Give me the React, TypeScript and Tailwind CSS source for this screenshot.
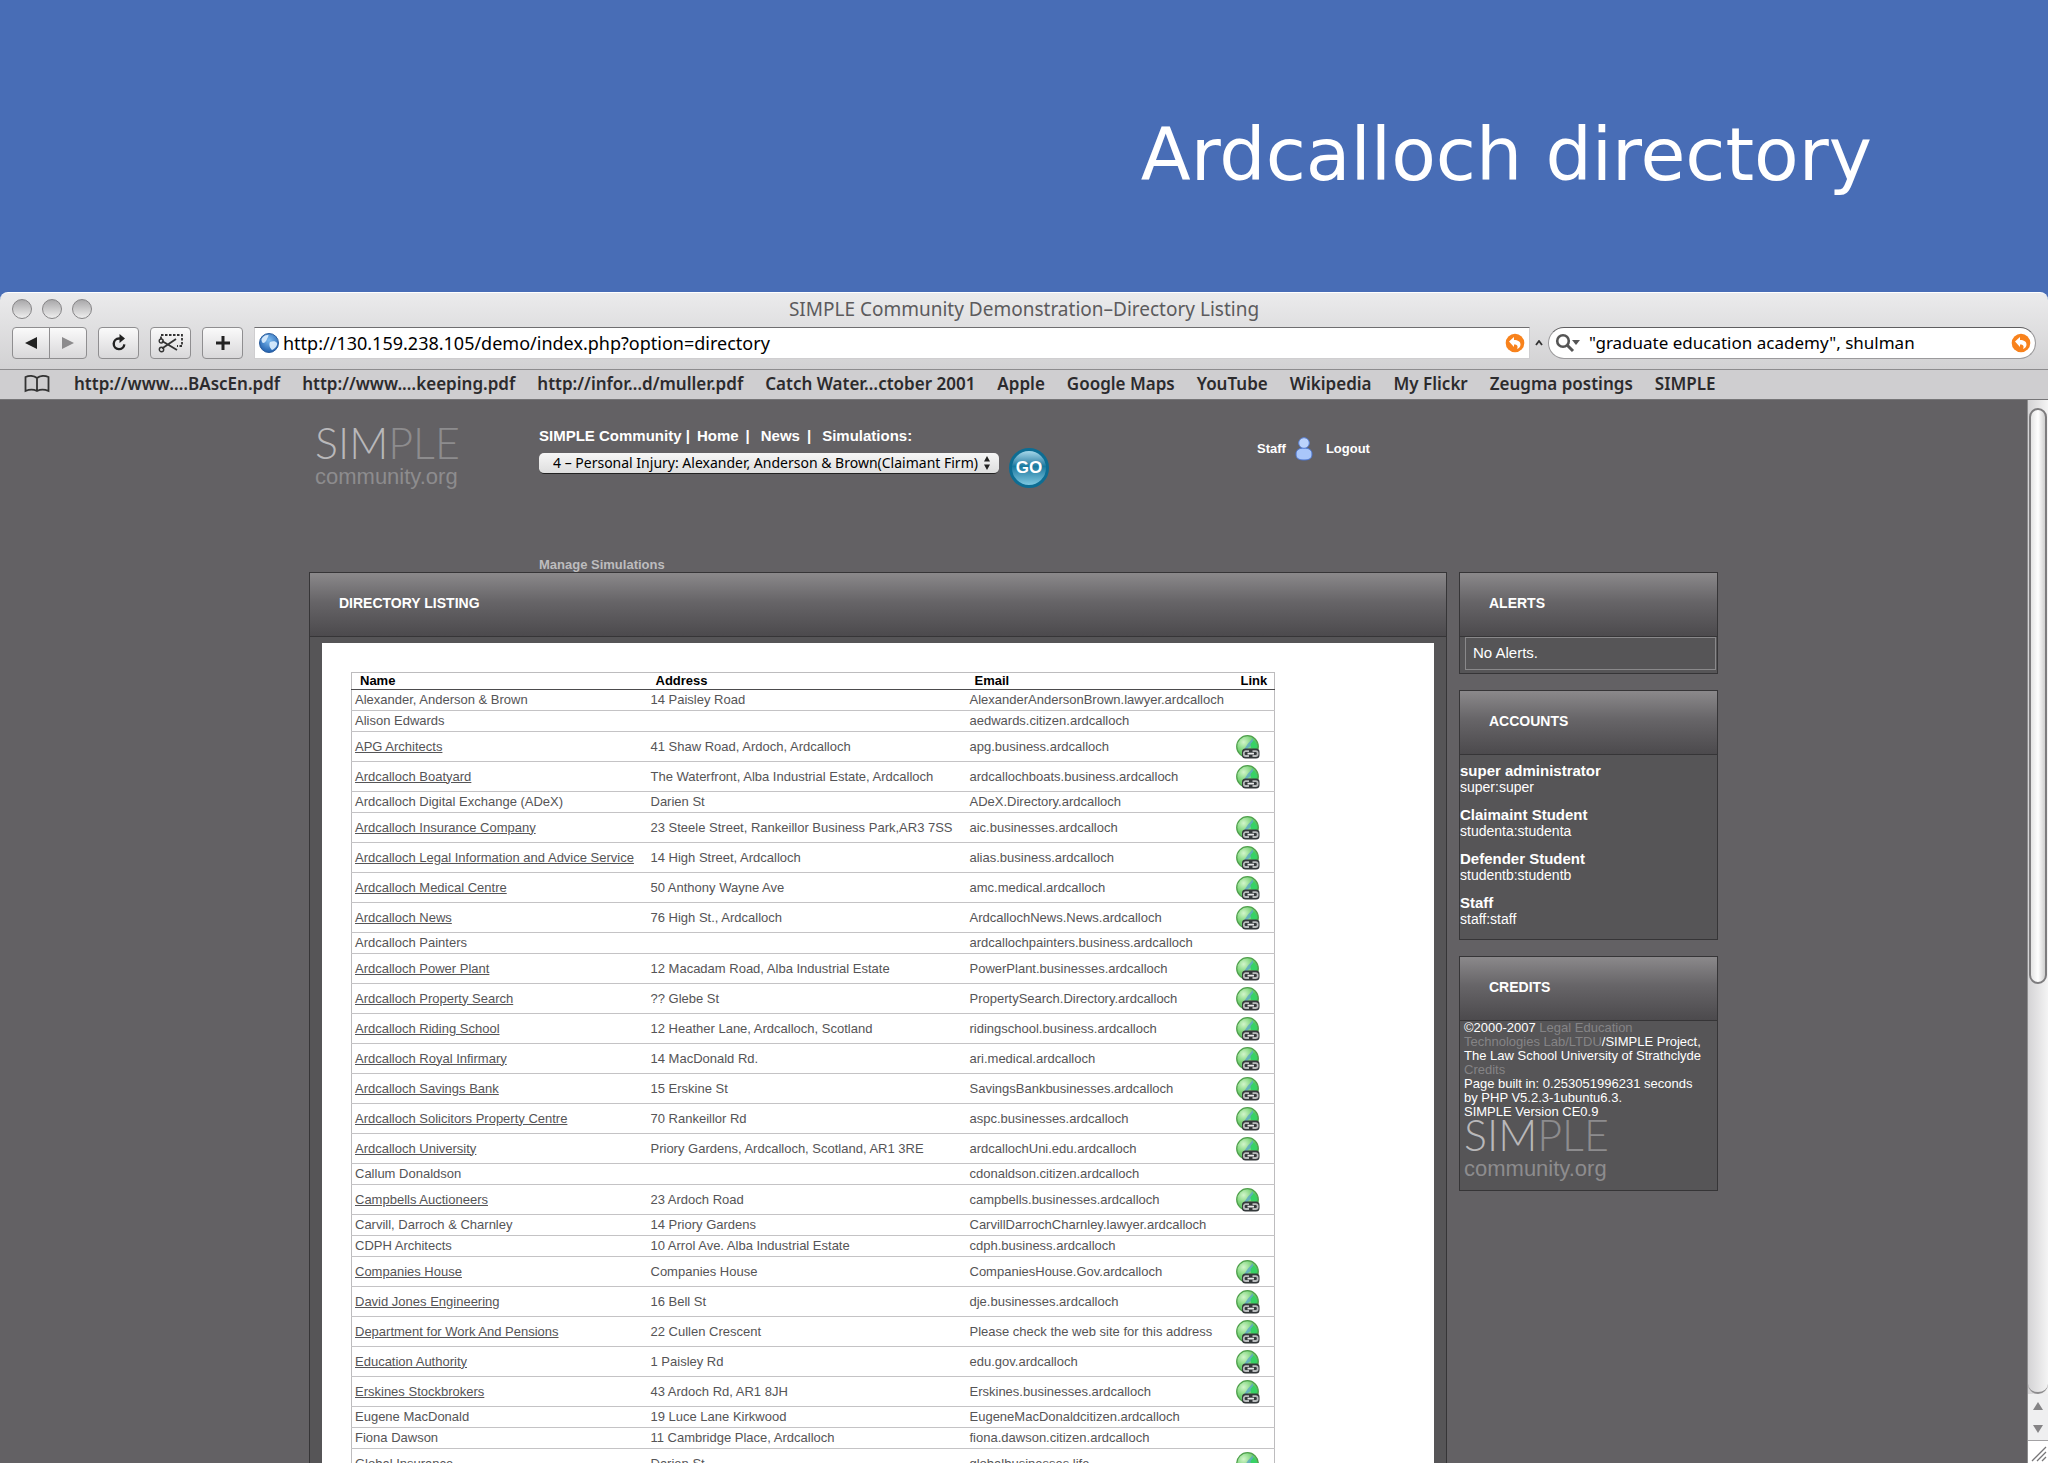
import React, { useState } from 'react';

type Entry = {
  name: string;
  address: string;
  email: string;
  linked?: boolean;
};

const BOOKMARKS = [
  'http://www.…BAscEn.pdf',
  'http://www.…keeping.pdf',
  'http://infor…d/muller.pdf',
  'Catch Water…ctober 2001',
  'Apple',
  'Google Maps',
  'YouTube',
  'Wikipedia',
  'My Flickr',
  'Zeugma postings',
  'SIMPLE',
];

const ENTRIES: Entry[] = [
  { name: 'Alexander, Anderson & Brown', address: '14 Paisley Road', email: 'AlexanderAndersonBrown.lawyer.ardcalloch' },
  { name: 'Alison Edwards', address: '', email: 'aedwards.citizen.ardcalloch' },
  { name: 'APG Architects', address: '41 Shaw Road, Ardoch, Ardcalloch', email: 'apg.business.ardcalloch', linked: true },
  { name: 'Ardcalloch Boatyard', address: 'The Waterfront, Alba Industrial Estate, Ardcalloch', email: 'ardcallochboats.business.ardcalloch', linked: true },
  { name: 'Ardcalloch Digital Exchange (ADeX)', address: 'Darien St', email: 'ADeX.Directory.ardcalloch' },
  { name: 'Ardcalloch Insurance Company', address: '23 Steele Street, Rankeillor Business Park,AR3 7SS', email: 'aic.businesses.ardcalloch', linked: true },
  { name: 'Ardcalloch Legal Information and Advice Service', address: '14 High Street, Ardcalloch', email: 'alias.business.ardcalloch', linked: true },
  { name: 'Ardcalloch Medical Centre', address: '50 Anthony Wayne Ave', email: 'amc.medical.ardcalloch', linked: true },
  { name: 'Ardcalloch News', address: '76 High St., Ardcalloch', email: 'ArdcallochNews.News.ardcalloch', linked: true },
  { name: 'Ardcalloch Painters', address: '', email: 'ardcallochpainters.business.ardcalloch' },
  { name: 'Ardcalloch Power Plant', address: '12 Macadam Road, Alba Industrial Estate', email: 'PowerPlant.businesses.ardcalloch', linked: true },
  { name: 'Ardcalloch Property Search', address: '?? Glebe St', email: 'PropertySearch.Directory.ardcalloch', linked: true },
  { name: 'Ardcalloch Riding School', address: '12 Heather Lane, Ardcalloch, Scotland', email: 'ridingschool.business.ardcalloch', linked: true },
  { name: 'Ardcalloch Royal Infirmary', address: '14 MacDonald Rd.', email: 'ari.medical.ardcalloch', linked: true },
  { name: 'Ardcalloch Savings Bank', address: '15 Erskine St', email: 'SavingsBankbusinesses.ardcalloch', linked: true },
  { name: 'Ardcalloch Solicitors Property Centre', address: '70 Rankeillor Rd', email: 'aspc.businesses.ardcalloch', linked: true },
  { name: 'Ardcalloch University', address: 'Priory Gardens, Ardcalloch, Scotland, AR1 3RE', email: 'ardcallochUni.edu.ardcalloch', linked: true },
  { name: 'Callum Donaldson', address: '', email: 'cdonaldson.citizen.ardcalloch' },
  { name: 'Campbells Auctioneers', address: '23 Ardoch Road', email: 'campbells.businesses.ardcalloch', linked: true },
  { name: 'Carvill, Darroch & Charnley', address: '14 Priory Gardens', email: 'CarvillDarrochCharnley.lawyer.ardcalloch' },
  { name: 'CDPH Architects', address: '10 Arrol Ave. Alba Industrial Estate', email: 'cdph.business.ardcalloch' },
  { name: 'Companies House', address: 'Companies House', email: 'CompaniesHouse.Gov.ardcalloch', linked: true },
  { name: 'David Jones Engineering', address: '16 Bell St', email: 'dje.businesses.ardcalloch', linked: true },
  { name: 'Department for Work And Pensions', address: '22 Cullen Crescent', email: 'Please check the web site for this address', linked: true },
  { name: 'Education Authority', address: '1 Paisley Rd', email: 'edu.gov.ardcalloch', linked: true },
  { name: 'Erskines Stockbrokers', address: '43 Ardoch Rd, AR1 8JH', email: 'Erskines.businesses.ardcalloch', linked: true },
  { name: 'Eugene MacDonald', address: '19 Luce Lane Kirkwood', email: 'EugeneMacDonaldcitizen.ardcalloch' },
  { name: 'Fiona Dawson', address: '11 Cambridge Place, Ardcalloch', email: 'fiona.dawson.citizen.ardcalloch' },
  { name: 'Global Insurance', address: 'Darien St', email: 'globalbusinesses.life', linked: true },
];

const ACCOUNTS = [
  { role: 'super administrator', login: 'super:super' },
  { role: 'Claimaint Student', login: 'studenta:studenta' },
  { role: 'Defender Student', login: 'studentb:studentb' },
  { role: 'Staff', login: 'staff:staff' },
];

const toolButton =
  'flex h-8 items-center justify-center rounded-[4px] border border-[#8f8e90] bg-linear-to-b from-[#fafafa] to-[#d9d8da]';

const SnapBack = () => (
  <svg viewBox="0 0 20 20" className="size-5 shrink-0">
    <circle cx="10" cy="10" r="9.3" fill="#f8821c" />
    <path d="M4 8.500 9 4v3c4 0 6.500 1.500 6.500 4.500 0 2-1.200 3.700-3.500 4.500 1.300-2.700.5-4.500-3-4.500V14z" fill="#fff" />
  </svg>
);

const LinkGlobe = () => (
  <svg viewBox="0 0 24 24" className="block size-6">
    <defs>
      <radialGradient id="globe" cx="32%" cy="30%" r="75%">
        <stop offset="0" stopColor="#d2f5cb" />
        <stop offset="0.5" stopColor="#7fd67c" />
        <stop offset="1" stopColor="#3fae4b" />
      </radialGradient>
    </defs>
    <circle cx="11.5" cy="11.5" r="10.8" fill="url(#globe)" stroke="#4f9f4c" strokeWidth="1.200" />
    <path d="M17 3 12 8.500 7 16l1 2 4-5 3-2 2-4z" fill="#5aa6c4" opacity=".8" />
    <path d="M14.500 9 18 5l3.500 6-1.500 3-5-1z" fill="#37d266" />
    <rect x="6" y="13.500" width="17.500" height="10" rx="3.500" fill="#34393b" />
    <path d="M13 16.200h-3.200a2 2 0 0 0-2 2v.8a2 2 0 0 0 2 2H13M16.500 16.200h3.200a2 2 0 0 1 2 2v.8a2 2 0 0 1-2 2h-3.200" fill="none" stroke="#b9bcbd" strokeWidth="1.800" />
    <path d="M11.500 18.600h6.500" stroke="#e8e9e9" strokeWidth="1.800" />
  </svg>
);

const Logo = () => (
  <div className="w-[150px]">
    <div className="font-['Lato'] text-[43px] leading-8 font-light text-[#b9b8ba]">
      SIM<span className="text-[#8d8c8e]">PLE</span>
    </div>
    <div className="pt-[6px] font-['Liberation_Sans'] text-[22px] leading-6 text-[#8d8c8e]">community.org</div>
  </div>
);

const Panel: React.FC<{ title: string; className?: string; children: React.ReactNode }> = ({
  title,
  className = '',
  children,
}) => (
  <section className={`flex flex-col border border-[#363537] bg-[#565557] ${className}`}>
    <h2 className="flex h-16 shrink-0 items-center border-b border-[#363537] bg-linear-to-b from-[#8b898b] via-[#676568] via-45% to-[#4c4a4d] px-[29px] pb-[2px] text-[14px] font-bold text-white">
      {title}
    </h2>
    {children}
  </section>
);

const BrowserChrome = () => {
  const [url, setUrl] = useState('http://130.159.238.105/demo/index.php?option=directory');
  const [query, setQuery] = useState('"graduate education academy", shulman');

  return (
    <header className="shrink-0 rounded-t-lg border-t border-white bg-linear-to-b from-[#ebebec] to-[#c8c7c9] font-['Noto_Sans',sans-serif]">
      <div className="grid h-[34px] grid-cols-[1fr_auto_1fr] items-center px-3 pb-[3px]">
        <div className="flex gap-[10px]">
          {['Close', 'Minimise', 'Zoom'].map((label) => (
            <button
              key={label}
              type="button"
              aria-label={label}
              className="size-5 rounded-full border border-[#858486] bg-linear-to-b from-[#a9a8aa] to-[#eeeeee]"
            />
          ))}
        </div>
        <h1 className="text-[19px] leading-6 text-[#5c5b5d]">SIMPLE Community Demonstration–Directory Listing</h1>
      </div>

      <div className="flex h-[42px] items-start gap-[11px] px-3">
        <div className="flex">
          <button type="button" aria-label="Back" className={`${toolButton} w-[38px] rounded-r-none`}>
            <svg viewBox="0 0 12 12" className="size-3"><path d="M12 0v12L0 6z" fill="#222" /></svg>
          </button>
          <button type="button" aria-label="Forward" className={`${toolButton} -ml-px w-[38px] rounded-l-none`}>
            <svg viewBox="0 0 12 12" className="size-3"><path d="M0 0v12l12-6z" fill="#8c8b8d" /></svg>
          </button>
        </div>
        <button type="button" aria-label="Reload" className={`${toolButton} w-[41px]`}>
          <svg viewBox="0 0 18 18" className="size-[18px]" fill="none">
            <path d="M11 4.500H9a5.300 5.300 0 1 0 5.300 5.800" stroke="#222" strokeWidth="2.400" />
            <path d="M9.500 0 15 4.500 9.500 9z" fill="#222" />
          </svg>
        </button>
        <button type="button" aria-label="Web clip" className={`${toolButton} w-[41px]`}>
          <svg viewBox="0 0 26 20" className="h-5 w-[26px]" fill="none" stroke="#333">
            <path d="M3 6V2h21v11h-5" strokeWidth="1.800" strokeDasharray="2.500 1.500" />
            <path d="M4 8l15 9M4 15.500 18 6" strokeWidth="1.800" />
            <circle cx="3.500" cy="16.500" r="2.200" strokeWidth="1.400" />
            <circle cx="3.200" cy="8" r="2" strokeWidth="1.400" />
          </svg>
        </button>
        <button type="button" aria-label="Add bookmark" className={`${toolButton} w-[41px]`}>
          <svg viewBox="0 0 14 14" className="size-[14px]"><path d="M7 0v14M0 7h14" stroke="#222" strokeWidth="3" /></svg>
        </button>

        <label className="flex h-8 flex-1 items-center gap-1 border border-[#cfced0] border-t-[#6f6e70] bg-white px-1">
          <svg viewBox="0 0 20 20" className="size-5 shrink-0">
            <defs>
              <radialGradient id="earth" cx="50%" cy="35%" r="65%">
                <stop offset="0" stopColor="#7fbcf0" />
                <stop offset="1" stopColor="#1f5fae" />
              </radialGradient>
            </defs>
            <circle cx="10" cy="10" r="9.500" fill="url(#earth)" stroke="#2a5c9c" />
            <path d="M2.500 6c2-3 4-4.500 7-4 0 2-1 2.500-1.500 4s-2 4-3.500 4-2-2-2-4zM11 9c3-1.500 6-1 7 1s-2 6-5 7c-2-2-3.500-5-2-8z" fill="#dff0ff" opacity=".9" />
          </svg>
          <input
            aria-label="Address"
            value={url}
            onChange={(e) => setUrl(e.target.value)}
            className="min-w-0 flex-1 text-[18px] leading-6 text-black outline-none"
          />
          <SnapBack />
        </label>
        <svg viewBox="0 0 8 6" className="-mx-[6px] mt-[13px] h-[6px] w-2"><path d="m1 5 3-4 3 4" fill="none" stroke="#333" strokeWidth="1.800" /></svg>
        <label className="flex h-8 w-[488px] items-center gap-2 rounded-full border border-[#9b9a9c] border-t-[#5f5e60] bg-white pr-1 pl-[6px]">
          <svg viewBox="0 0 26 20" className="h-5 w-[26px] shrink-0" fill="none">
            <circle cx="8" cy="8" r="5.800" stroke="#555" strokeWidth="2.600" />
            <path d="m12 12 6 6" stroke="#555" strokeWidth="3" />
            <path d="M17 7h8l-4 5z" fill="#555" />
          </svg>
          <input
            aria-label="Search"
            value={query}
            onChange={(e) => setQuery(e.target.value)}
            className="min-w-0 flex-1 text-[17px] leading-6 text-black outline-none"
          />
          <SnapBack />
        </label>
      </div>

      <nav className="flex h-[31px] items-center gap-[22px] border-y border-t-[#8d8c8e] border-b-[#777678] bg-[#cfced0] px-6 pb-[2px] text-[17px] leading-6 font-semibold text-[#2c2b2d]">
        <svg viewBox="0 0 26 18" className="mr-[2px] h-[18px] w-[26px] shrink-0" fill="none" stroke="#333" strokeWidth="1.800">
          <path d="M13 3C10 .5 5 .5 1.500 2v14c3.500-1.500 8.500-1.500 11.500 0 3-1.500 8-1.500 11.500 0V2C21 .5 16 .5 13 3zM13 3v13" />
        </svg>
        {BOOKMARKS.map((label) => (
          <a key={label} href="#" className="whitespace-nowrap">{label}</a>
        ))}
      </nav>
    </header>
  );
};

const SiteHeader = () => (
  <div className="flex h-[172px] items-start pt-[27px] pl-[6px] text-white">
    <div className="w-56 shrink-0"><Logo /></div>
    <div className="flex h-full w-[718px] flex-col">
      <nav className="flex gap-[7px] text-[15px] leading-[18px] font-bold whitespace-nowrap">
        <span><a href="#">SIMPLE Community</a> |</span>
        <a href="#">Home</a>
        <span>|</span>
        <a href="#" className="ml-1">News</a>
        <span>|</span>
        <label htmlFor="simulation" className="ml-1">Simulations:</label>
      </nav>
      <div className="flex items-start gap-[10px]">
        <div className="relative mt-2">
          <select
            id="simulation"
            className="block h-[21px] w-[460px] appearance-none rounded-[5px] border-b border-[#222] bg-linear-to-b from-[#f6f6f6] to-[#dedede] pl-[14px] font-['Noto_Sans',sans-serif] text-[14px] leading-5 text-black"
          >
            <option>4 – Personal Injury: Alexander, Anderson &amp; Brown(Claimant Firm)</option>
          </select>
          <svg viewBox="0 0 8 16" className="pointer-events-none absolute top-[2px] right-2 h-4 w-2">
            <path d="M1 6.500 4 1l3 5.500zM1 9.500h6L4 15z" fill="#222" />
          </svg>
        </div>
        <button
          type="button"
          className="mt-[3px] size-10 rounded-full border-[3px] border-[#0d6d93] bg-linear-to-b from-[#a5d8ea] via-[#15799f] via-45% to-[#7cc8e0] text-[17px] font-bold text-white"
        >
          GO
        </button>
      </div>
      <a href="#" className="mt-auto text-[13px] leading-[15px] font-bold text-[#bdbcbe]">Manage Simulations</a>
    </div>
    <div className="flex items-center gap-[9px] pt-[10px] text-[13px] font-bold">
      <span>Staff</span>
      <svg viewBox="0 0 18 24" className="h-6 w-[18px]">
        <path d="M1 17c0-4 3-6 8-6s8 2 8 6c0 4-2 6-8 6s-8-2-8-6z" fill="#a9c6fa" stroke="#4a74d0" />
        <circle cx="9" cy="6" r="5.300" fill="#bcd3fb" stroke="#5c84d8" />
      </svg>
      <a href="#" className="ml-1">Logout</a>
    </div>
  </div>
);

const DirectoryTable = () => (
  <table className="w-[924px] table-fixed border-collapse border border-[#bdbcbe] text-[13px] leading-4 whitespace-nowrap text-[#555456]">
    <colgroup>
      <col className="w-[296px]" />
      <col className="w-[319px]" />
      <col className="w-[266px]" />
      <col />
    </colgroup>
    <thead>
      <tr className="h-[17px] border-b border-[#4c4b4d] text-left text-black">
        <th className="py-0 pr-0 pl-2">Name</th>
        <th className="py-0 pr-0 pl-2">Address</th>
        <th className="py-0 pr-0 pl-2">Email</th>
        <th className="py-0 pr-0 pl-2">Link</th>
      </tr>
    </thead>
    <tbody>
      {ENTRIES.map((entry) => (
        <tr key={entry.name} className={`border-b border-[#c4c3c5] ${entry.linked ? 'h-[30px]' : 'h-[21px]'}`}>
          <td className="p-0 pl-[3px]">
            {entry.linked ? <a href="#" className="underline">{entry.name}</a> : entry.name}
          </td>
          <td className="p-0 pl-[3px]">{entry.address}</td>
          <td className="p-0 pl-[3px]">{entry.email}</td>
          <td className="p-0 pl-[3px]">
            {entry.linked && <a href="#" aria-label={`Open ${entry.name}`}><LinkGlobe /></a>}
          </td>
        </tr>
      ))}
    </tbody>
  </table>
);

const Sidebar = () => (
  <aside className="flex w-[259px] shrink-0 flex-col gap-4 text-white">
    <Panel title="ALERTS" className="h-[102px]">
      <p className="mr-px ml-[5px] h-[33px] border border-[#89888a] px-[7px] py-[7px] text-[15px] leading-4">No Alerts.</p>
    </Panel>
    <Panel title="ACCOUNTS" className="h-[250px]">
      <dl className="pt-2 leading-4">
        {ACCOUNTS.map((account) => (
          <div key={account.role} className="mb-3">
            <dt className="text-[15px] leading-4 font-bold">{account.role}</dt>
            <dd className="text-[14px] leading-4">{account.login}</dd>
          </div>
        ))}
      </dl>
    </Panel>
    <Panel title="CREDITS" className="h-[235px]">
      <div className="pl-1 text-[13px] leading-[14px] whitespace-nowrap">
        <p>©2000-2007 <a href="#" className="text-[#858486]">Legal Education</a></p>
        <p><a href="#" className="text-[#858486]">Technologies Lab/LTDU</a>/SIMPLE Project,</p>
        <p>The Law School University of Strathclyde</p>
        <p><a href="#" className="text-[#858486]">Credits</a></p>
        <p>Page built in: 0.253051996231 seconds</p>
        <p>by PHP V5.2.3-1ubuntu6.3.</p>
        <p>SIMPLE Version CE0.9</p>
        <Logo />
      </div>
    </Panel>
  </aside>
);

const Scrollbar = () => (
  <div className="flex w-[21px] shrink-0 flex-col border-l border-[#8d8c8e] bg-linear-to-r from-[#d4d3d5] to-[#f4f4f4]">
    <div className="mx-px mt-2 h-[576px] rounded-full border-2 border-[#7d7c7e] bg-linear-to-r from-[#e4e4e4] via-white to-[#cfcfcf]" />
    <div className="flex-1 rounded-b-full border-b-2 border-[#8d8c8e]" />
    <div className="flex h-[47px] flex-col items-center justify-around border-b border-[#a3a2a4] bg-[#efeff0]">
      <svg viewBox="0 0 10 8" className="h-2 w-[10px]"><path d="M0 8 5 0l5 8z" fill="#858486" /></svg>
      <svg viewBox="0 0 10 8" className="h-2 w-[10px]"><path d="M0 0 5 8l5-8z" fill="#858486" /></svg>
    </div>
    <svg viewBox="0 0 20 22" className="h-[22px] w-5 bg-white" stroke="#777678" strokeWidth="1.300">
      <path d="M4 20 18 6M9 20l9-9M14 20l4-4" />
    </svg>
  </div>
);

const App: React.FC = () => {
  return (
    <div className="flex h-screen flex-col overflow-hidden bg-[#486db6]">
      <div className="flex h-[292px] shrink-0 items-center justify-end pt-[18px] pr-[176px] font-['DejaVu_Sans',sans-serif] text-[73px] text-white">
        Ardcalloch directory
      </div>
      <BrowserChrome />
      <div className="flex min-h-0 flex-1 bg-[#636164] font-['Liberation_Sans',sans-serif]">
        <main className="min-w-0 flex-1 overflow-hidden">
          <div className="mx-auto w-[1409px]">
            <SiteHeader />
            <div className="flex items-start gap-3">
              <Panel title="DIRECTORY LISTING" className="flex-1">
                <div className="mx-3 mt-[6px] bg-white pt-[29px] pb-8 pl-[29px]">
                  <DirectoryTable />
                </div>
              </Panel>
              <Sidebar />
            </div>
          </div>
        </main>
        <Scrollbar />
      </div>
    </div>
  );
};

export default App;
